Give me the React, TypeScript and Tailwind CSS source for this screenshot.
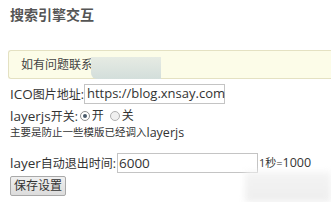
export default function App() {
  return (
    <div className="relative h-[202px] w-[331px] overflow-hidden bg-white font-['Open_Sans','Noto_Sans_CJK_SC',sans-serif] text-[#333]">
      <h2 className="pl-[10px] pt-[6px] text-[14px] font-bold leading-[18px] text-[#555]">搜索引擎交互</h2>

      {/* notice */}
      <div className="ml-[8px] mt-[26px] flex h-[29px] items-center rounded-l-[3px] border border-r-0 border-[#e4e1c2] bg-[#fcfce8] pl-[12px] text-[12px] text-[#444]">
        如有问题联系
      </div>

      <div className="pl-[10px] text-[12px]">
        <div className="mt-[5px] flex h-[20px] items-center">
          <span>
            <span className="text-[13.5px]">ICO</span>图片地址:
          </span>
          <span className="flex h-[20px] w-[141px] items-center border border-[#c4c4c4] pl-[2px] text-[13px] text-[#333]">
            https://blog.xnsay.com
          </span>
        </div>

        <div className="mt-[4px] flex h-[16px] items-center">
          <span>
            <span className="text-[13.5px]">layerjs</span>开关:
          </span>
          <span className="ml-[2px] flex h-[10px] w-[10px] items-center justify-center rounded-full border border-[#8f8f8f] bg-white">
            <span className="h-[4px] w-[4px] rounded-full bg-[#4a5a6a]" />
          </span>
          <span className="ml-[2px]">开</span>
          <span className="ml-[6px] h-[10px] w-[10px] rounded-full border border-[#b0b0b0] bg-[#f0f0f0]" />
          <span className="ml-[2px]">关</span>
        </div>

        <div className="mt-[2px] flex h-[14px] items-center text-[10.5px]">
          主要是防止一些模版已经调入<span className="text-[12.5px]">layerjs</span>
        </div>

        <div className="mt-[13px] flex h-[20px] items-center">
          <span>
            <span className="text-[13.5px]">layer</span>自动退出时间:
          </span>
          <span className="ml-[1px] flex h-[20px] w-[141px] items-center border border-[#c4c4c4] pl-[1px] text-[13.5px]">
            6000
          </span>
          <span className="ml-[1px] text-[11px]">
            1秒=<span className="text-[12.5px]">1000</span>
          </span>
        </div>

        <button className="mt-[3px] h-[20px] rounded-[2px] border border-[#a9a9a9] bg-gradient-to-b from-[#f0f0f0] to-[#dcdcdc] px-[3px] text-[12px] leading-none text-[#333]">
          保存设置
        </button>
      </div>

      {/* smudges over the picture */}
      <div className="absolute left-[91px] top-[57px] h-[22px] w-[70px] rounded-bl-[6px] bg-gradient-to-b from-[#e6ebe3] to-[#d3dedb] blur-[0.5px]" />
      <div className="absolute left-[245px] top-[172px] h-[30px] w-[86px] bg-gradient-to-b from-[#f4f4f4] to-[#eeeeee] blur-[3px]" />
    </div>
  );
}
